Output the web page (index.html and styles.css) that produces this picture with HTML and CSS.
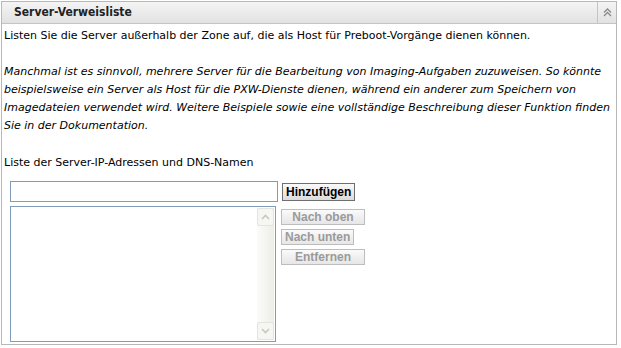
FILE: index.html
```html
<!DOCTYPE html>
<html lang="de">
<head>
    <meta charset="UTF-8">
    <title>Server-Verweisliste</title>
    <link rel="stylesheet" href="styles.css">
</head>
<body>
    <div class="panel">
        <div class="panel-header">
            <h2>Server-Verweisliste</h2>
            <div class="collapse-btn">
                <svg width="9" height="9" viewBox="0 0 9 9">
                    <path d="M1 4.5 L4.5 1 L8 4.5 M1 8 L4.5 4.5 L8 8" fill="none" stroke="#8a8a8a" stroke-width="1.3"/>
                </svg>
            </div>
        </div>
        <div class="panel-body">
            <p class="intro">Listen Sie die Server außerhalb der Zone auf, die als Host für Preboot-Vorgänge dienen können.</p>
            <p class="note">Manchmal ist es sinnvoll, mehrere Server für die Bearbeitung von Imaging-Aufgaben zuzuweisen. So könnte beispielsweise ein Server als Host für die PXW-Dienste dienen, während ein anderer zum Speichern von Imagedateien verwendet wird. Weitere Beispiele sowie eine vollständige Beschreibung dieser Funktion finden Sie in der Dokumentation.</p>
            <p class="list-label">Liste der Server-IP-Adressen und DNS-Namen</p>

            <div class="server-editor">
                <div class="add-row">
                    <input type="text" class="server-input" title="Server">
                    <button class="btn">Hinzufügen</button>
                </div>
                <div class="list-row">
                    <div class="server-list">
                        <div class="scrollbar">
                            <div class="scroll-arrow">
                                <svg width="9" height="6" viewBox="0 0 9 6"><path d="M1 5 L4.5 1.5 L8 5" fill="none" stroke="#c8c8c0" stroke-width="1.6"/></svg>
                            </div>
                            <div class="scroll-arrow">
                                <svg width="9" height="6" viewBox="0 0 9 6"><path d="M1 1 L4.5 4.5 L8 1" fill="none" stroke="#c8c8c0" stroke-width="1.6"/></svg>
                            </div>
                        </div>
                    </div>
                    <div class="list-actions">
                        <button class="btn wide" disabled>Nach oben</button>
                        <button class="btn" disabled>Nach unten</button>
                        <button class="btn wide" disabled>Entfernen</button>
                    </div>
                </div>
            </div>
        </div>
    </div>
</body>
</html>
```

FILE: styles.css
```css
body {
    margin: 0;
    padding: 1px 4px 3px 1px;
    font-family: "DejaVu Sans", Verdana, sans-serif;
    font-size: 11px;
    color: #000;
    background-color: #fff;
}
.panel {
    border: 1px solid #b8b8b8;
    height: 344px;
    box-sizing: border-box;
}
.panel-header {
    display: flex;
    height: 21px;
    background: linear-gradient(#f4f4f4, #e2e2e2);
    border-bottom: 1px solid #c4c4c4;
}
.panel-header h2 {
    flex: 1;
    margin: 0;
    padding-left: 12px;
    font-family: "DejaVu Sans Condensed", "DejaVu Sans", sans-serif;
    font-size: 12px;
    font-weight: bold;
    line-height: 21px;
    color: #222;
}
.collapse-btn {
    width: 18px;
    border-left: 1px solid #c4c4c4;
    display: flex;
    align-items: center;
    justify-content: center;
}
.panel-body {
    padding: 0 2px;
}
.panel-body p {
    margin: 0;
    line-height: 18px;
}
.intro {
    padding-top: 3px;
}
.note {
    margin-top: 18px !important;
    font-style: italic;
}
.list-label {
    margin-top: 19px !important;
}
.server-editor {
    padding: 9px 0 0 6px;
}
.add-row {
    display: flex;
    align-items: center;
    gap: 4px;
}
.server-input {
    width: 268px;
    height: 21px;
    box-sizing: border-box;
    margin: 0;
    border: 1px solid #7f9db9;
}
.btn {
    font-family: "Liberation Sans", Arial, sans-serif;
    font-size: 12px;
    font-weight: bold;
    color: #000;
    background: linear-gradient(#fafafa, #dcdcdc);
    border: 1px solid #6f6f6f;
    padding: 1px 3px;
    margin: 0;
    line-height: 14px;
}
.btn:disabled {
    color: #9a9a9a;
    border-color: #bdbdbd;
    background: linear-gradient(#fafafa, #e6e6e6);
    padding: 0 3px;
}
.btn.wide {
    width: 84px;
}
.list-row {
    display: flex;
    gap: 5px;
    margin-top: 4px;
}
.server-list {
    width: 266px;
    height: 136px;
    box-sizing: border-box;
    border: 1px solid #7f9db9;
    display: flex;
    justify-content: flex-end;
}
.scrollbar {
    width: 17px;
    margin: 1px;
    background: linear-gradient(to right, #fbfbf9, #eeeee8);
    display: flex;
    flex-direction: column;
    justify-content: space-between;
}
.scroll-arrow {
    height: 16px;
    border: 1px solid #e4e4dc;
    border-radius: 2px;
    background: #f6f6f2;
    display: flex;
    align-items: center;
    justify-content: center;
}
.list-actions {
    display: flex;
    flex-direction: column;
    align-items: flex-start;
    gap: 4px;
    padding-top: 3px;
}
```
